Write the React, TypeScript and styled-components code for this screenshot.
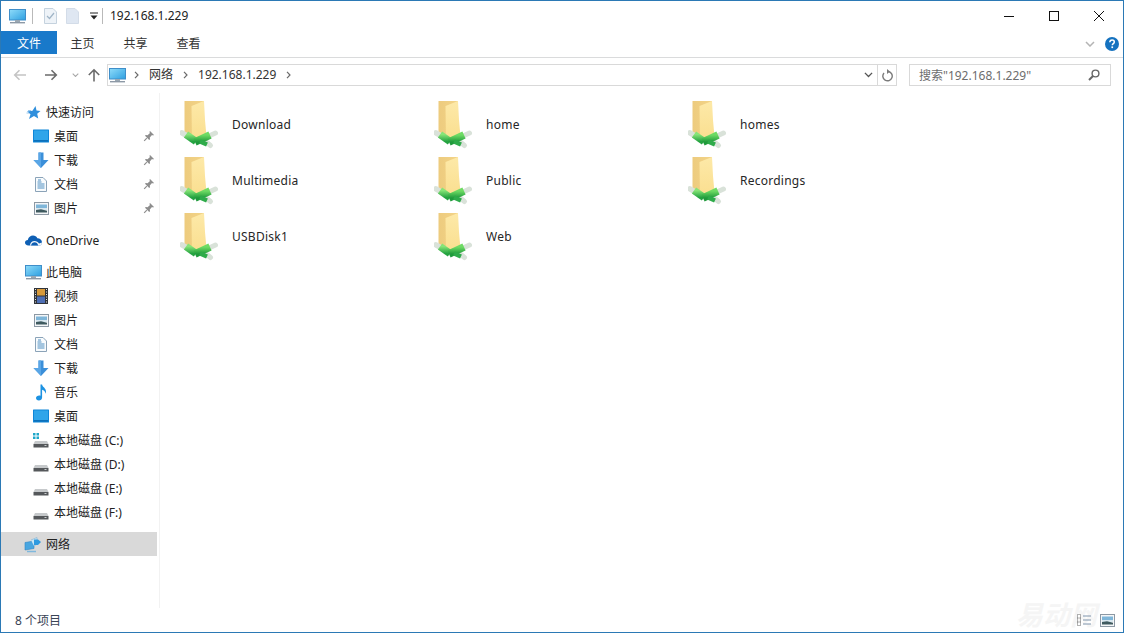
import React from "react";
import styled, { createGlobalStyle } from "styled-components";

const Global = createGlobalStyle`
  html, body { margin: 0; padding: 0; background: #fff; overflow: hidden; }
  * { box-sizing: border-box; }
`;

const FONT = `"Noto Sans", "Noto Sans CJK SC", sans-serif`;

const Win = styled.div`
  position: relative; width: 1124px; height: 633px; display: flex; flex-direction: column;
  border: 1px solid #2b79b5; background: #fff;
  font-family: ${FONT}; font-size: 12px; color: #1e1e1e; overflow: hidden;
`;
const TitleBar = styled.div`
  height: 30px; flex: none; display: flex; align-items: center; padding-left: 8px;
`;
const QuickBtn = styled.span<{ $w: number }>`
  width: ${p => p.$w}px; height: 20px; flex: none; display: flex; align-items: center;
`;
const Sep = styled.i`
  width: 1px; height: 16px; background: #b9b9b9; display: block; flex: none;
`;
const TitleText = styled.span`
  margin-left: 7px; font-size: 12px; color: #222; line-height: 16px;
`;
const Controls = styled.div`
  margin-left: auto; display: flex; align-items: center; height: 30px; padding-right: 19px; gap: 35px;
`;
const Tabs = styled.div`
  height: 27px; flex: none; display: flex; align-items: flex-start; border-bottom: 1px solid #dadbdc; position: relative;
`;
const FileTab = styled.div`
  width: 56px; height: 23px; background: #1979ca; color: #fff; display: flex; align-items: center; justify-content: center;
`;
const Tab = styled.div`
  width: 53px; height: 23px; padding-right: 2px; display: flex; align-items: center; justify-content: center; color: #333;
`;
const RibbonRight = styled.div`
  margin-left: auto; display: flex; align-items: center; gap: 10px; padding-right: 4px; height: 25px;
`;
const AddressRow = styled.div`
  height: 35px; padding-bottom: 1px; flex: none; display: flex; align-items: center;
`;
const NavButtons = styled.div`
  width: 106px; height: 22px; padding-left: 12px; display: flex; align-items: center; flex: none;
`;
const NavGap = styled.span<{ $w: number }>`
  width: ${p => p.$w}px; flex: none;
`;
const AddressBox = styled.div`
  width: 790px; height: 22px; flex: none; border: 1px solid #d9d9d9; display: flex; align-items: center; padding-left: 1px;
`;
const Crumb = styled.span`
  color: #333; margin: 0 10px 0 10px; line-height: 18px;
`;
const AddrTail = styled.div`
  margin-left: auto; display: flex; align-items: center; height: 100%;
`;
const AddrCell = styled.span<{ $w: number; $line?: boolean }>`
  width: ${p => p.$w}px; height: 100%; display: flex; align-items: center; justify-content: center;
  ${p => p.$line ? "border-left: 1px solid #d9d9d9;" : ""}
`;
const SearchBox = styled.div`
  margin-left: 12px; width: 202px; height: 22px; border: 1px solid #d9d9d9; display: flex; align-items: center;
  justify-content: space-between; padding: 0 10px 0 9px; color: #6d6d6d; flex: none;
`;
const Body = styled.div`
  flex: 1; min-height: 0; display: flex;
`;
const Sidebar = styled.nav`
  width: 159px; flex: none; border-right: 1px solid #f2f2f2; padding-top: 7px;
  display: flex; flex-direction: column;
`;
const Row = styled.div<{ $deep?: boolean; $sel?: boolean; $gap?: number }>`
  height: 24px; flex: none; width: 156px; display: flex; align-items: center; position: relative;
  padding-left: ${p => p.$deep ? 30 : 22}px; margin-top: ${p => p.$gap || 0}px;
  background: ${p => p.$sel ? "#d9d9d9" : "transparent"}; color: #222;
`;
const RowIcon = styled.span`
  width: 20px; height: 18px; flex: none; display: flex; align-items: center; justify-content: center; margin-right: 3px;
`;
const Pin = styled.span`
  position: absolute; right: 2px; top: 6px; width: 12px; height: 12px; display: flex;
`;
const Content = styled.main`
  flex: 1; padding: 3px 0 0 20px; display: grid; grid-template-columns: repeat(3, 254px); grid-auto-rows: 56px; align-content: start;
`;
const Item = styled.div`
  display: flex; align-items: center; height: 56px;
`;
const ItemIcon = styled.span`
  width: 40px; height: 56px; flex: none; margin-right: 12px; display: block;
`;
const ItemLabel = styled.span`
  color: #262626; font-size: 12px; letter-spacing: .25px;
`;
const StatusBar = styled.div`
  height: 24px; flex: none; display: flex; align-items: center; padding-left: 14px; color: #3a4456; position: relative;
`;
const StatusIcons = styled.div`
  margin-left: auto; padding-right: 8px; display: flex; align-items: center; gap: 9px; position: relative; z-index: 1;
`;
const Watermark = styled.span`
  position: absolute; right: 26px; bottom: 0; font-size: 27px; font-style: italic; font-weight: 700;
  color: #f5f5f5; line-height: 34px;
`;

const Computer = ({ s = 17 }: { s?: number }) => (
  <svg width={s} height={s} viewBox="0 0 17 17">
    <defs><linearGradient id="scr" x1="0" y1="0" x2="1" y2="1"><stop offset="0" stopColor="#8fdcfa" /><stop offset="1" stopColor="#2d9fe0" /></linearGradient></defs>
    <rect x="0.5" y="1.5" width="16" height="10.5" fill="url(#scr)" stroke="#3f8ec9" />
    <rect x="6" y="12" width="5" height="2" fill="#9aa7b2" />
    <rect x="1" y="14" width="15" height="1.4" fill="#8d99a6" />
  </svg>
);
const Star = () => (
  <svg width="15" height="15" viewBox="0 0 15 15">
    <path d="M9.5 1 L10.5 5.5 L14.5 6 L11.2 8.8 L12.2 13.5 L8 11 L3 14 L4.5 9.2 L1 6.5 L6.5 5.8 Z" fill="#2f8fdc" />
    <path d="M2 5.5h3M0.5 8h2.5" stroke="#9cc9ee" strokeWidth="1" />
  </svg>
);
const Desktop = () => (
  <svg width="16" height="14" viewBox="0 0 16 14">
    <rect x="0" y="0.5" width="16" height="13" rx="0.5" fill="#0f86d8" />
    <rect x="1" y="1.5" width="14" height="10" fill="#2fa5ea" />
    <rect x="1" y="11" width="14" height="1.5" fill="#0c6fb8" />
  </svg>
);
const Down = () => (
  <svg width="16" height="17" viewBox="0 0 16 17">
    <path d="M5.5 0.5h5V8H15.5L8 16 0.5 8H5.5Z" fill="#3b8fd9" />
    <path d="M5.5 0.5h2.5V16L0.5 8H5.5Z" fill="#5aa6e6" />
  </svg>
);
const Doc = () => (
  <svg width="12" height="15" viewBox="0 0 12 15">
    <path d="M0.5 0.5H8L11.5 4V14.5H0.5Z" fill="#f8fbfd" stroke="#8ba3b8" />
    <path d="M2.5 5h4M2.5 7h7M2.5 9h7M2.5 11h7M3 3h3" stroke="#4f8fc2" strokeWidth="1" />
  </svg>
);
const Pic = () => (
  <svg width="15" height="13" viewBox="0 0 15 13">
    <rect x="0.5" y="0.5" width="14" height="12" fill="#f4f6f8" stroke="#8c98a3" />
    <rect x="2" y="2.5" width="11" height="4" fill="#7fb6d9" />
    <rect x="2" y="6" width="11" height="2" fill="#d7e6ee" />
    <path d="M2 8l5-.8 6 1.6V10.5H2Z" fill="#3f5a5f" />
  </svg>
);
const Cloud = () => (
  <svg width="17" height="11" viewBox="0 0 17 11">
    <path d="M3.5 10.5C1.2 10.5 0 9.2 0 7.6 0 6 1.2 5 2.8 5 3.4 2.2 5.6 0.5 8 0.5c2 0 3.6 1 4.4 2.8C15 3.3 17 5.2 17 7.4c0 1.9-1.3 3.1-3 3.1Z" fill="#0e5fb4" />
    <path d="M5 10.5C5 7.8 7 6 9.5 6c2 0 3.5 1 4.5 2.5L17 7.4c0 1.9-1.3 3.1-3 3.1Z" fill="#fff" opacity=".95" />
    <path d="M6 10.5c.4-2 2-3.2 3.6-3.2 1.8 0 3 1 3.6 3.2Z" fill="#0e5fb4" />
  </svg>
);
const Film = () => (
  <svg width="14" height="16" viewBox="0 0 14 16">
    <rect width="14" height="16" fill="#30343a" />
    <rect x="3" y="1" width="8" height="6.5" fill="#d79a3b" />
    <rect x="3" y="8.5" width="8" height="6.5" fill="#4e6fb5" />
    <path d="M1 1.5h1M1 4h1M1 6.500h1M1 9h1M1 11.500h1M1 14h1M12 1.500h1M12 4h1M12 6.500h1M12 9h1M12 11.500h1M12 14h1" stroke="#e6e6e6" strokeWidth="1.2" />
  </svg>
);
const Note = () => (
  <svg width="12" height="17" viewBox="0 0 12 17">
    <path d="M5.500 0.500h1.600c.3 2.600 3.900 3.400 3.900 7 0 .9-.2 1.700-.6 2.300.1-2.200-1.700-3.600-3.300-4V13.500c0 1.900-1.500 3-3.300 3C2.200 16.500 1 15.500 1 14.100c0-1.500 1.500-2.600 3.200-2.600.5 0 .9.100 1.300.2Z" fill="#1c92e2" />
  </svg>
);
const Drive = ({ win }: { win?: boolean }) => (
  <svg width="16" height="15" viewBox="0 0 16 15">
    {win && <g fill="#1fa7c9"><rect x="0" y="0" width="2.5" height="2.500" /><rect x="3.500" y="0" width="2.500" height="2.500" /><rect x="0" y="3.500" width="2.500" height="2.500" /><rect x="3.500" y="3.500" width="2.500" height="2.500" /></g>}
    <path d="M2 8h12l1.500 3H.5Z" fill="#c6c9cb" />
    <rect x="0.500" y="11" width="15" height="3.500" fill="#55585b" />
    <rect x="11.500" y="12" width="2" height="1" fill="#c9ccce" />
  </svg>
);
const Network = () => (
  <svg width="18" height="17" viewBox="0 0 18 17">
    <path d="M1 6.500l9-1.500v7.500l-9 1.500Z" fill="#49a6e0" stroke="#2f86c6" strokeWidth=".6" />
    <path d="M7 4L13 1.500V8l-3 2" fill="#c9e6f6" stroke="#7fb2d4" strokeWidth=".6" />
    <path d="M10 3.500h4l3 2.500-3 3h-4Z" fill="#2e9ae0" />
    <path d="M3 15.500h9" stroke="#7fb8dd" strokeWidth="1.500" />
  </svg>
);
const PinIcon = () => (
  <svg width="12" height="12" viewBox="0 0 12 12">
    <path d="M7 1l4 4-1 .6-1-.5L6.800 7.400 7 9.300 6.200 10 2 5.800l.7-.8 1.900.2L7 3 6.400 2Z" fill="#8d8d8d" />
    <path d="M3.800 8.200L1.200 10.800" stroke="#8d8d8d" strokeWidth="1.200" />
  </svg>
);

const ShareFolder = () => (
  <svg width="40" height="56" viewBox="0 0 40 56">
    <defs>
      <linearGradient id="fa" x1="0" y1="0" x2="1" y2="0"><stop offset="0" stopColor="#edcb7e" /><stop offset="1" stopColor="#f3d488" /></linearGradient>
      <linearGradient id="fb" x1="0" y1="0" x2="0" y2="1"><stop offset="0" stopColor="#fde9a8" /><stop offset="1" stopColor="#fade8e" /></linearGradient>
      <linearGradient id="pg" x1="0" y1="0" x2="0" y2="1"><stop offset="0" stopColor="#86e477" /><stop offset="1" stopColor="#25a341" /></linearGradient>
      <linearGradient id="ph" x1="0" y1="0" x2="0" y2="1"><stop offset="0" stopColor="#6edb64" /><stop offset="1" stopColor="#1f9a3b" /></linearGradient>
    </defs>
    <path d="M4.500 5H24V36L12 44L4.500 40Z" fill="url(#fa)" />
    <path d="M11.500 10L24 5L25 24L26.500 40.500L12 46Z" fill="url(#fb)" />
    <path d="M2 36.800L7 39.800" stroke="#d9e2d9" strokeWidth="5.500" strokeLinecap="round" />
    <path d="M29 40L35.500 37" stroke="#d9e2d9" strokeWidth="5" strokeLinecap="round" />
    <path d="M25 45L30.500 49.500" stroke="#d9e2d9" strokeWidth="5" strokeLinecap="round" />
    <path d="M6 38.500L16 45.500" stroke="url(#pg)" strokeWidth="7.500" />
    <path d="M15 46L30 39" stroke="url(#ph)" strokeWidth="7.500" />
    <path d="M20 45.500L27 48.500" stroke="#2eab4a" strokeWidth="4.500" />
  </svg>
);

const Glyph = {
  Back: ({ c }: { c: string }) => (
    <svg width="14" height="12" viewBox="0 0 14 12"><path d="M13 6H2M6.500 1.200L1.700 6l4.800 4.800" stroke={c} strokeWidth="1.600" fill="none" /></svg>
  ),
  Fwd: ({ c }: { c: string }) => (
    <svg width="14" height="12" viewBox="0 0 14 12"><path d="M1 6h11M7.500 1.200L12.300 6l-4.800 4.800" stroke={c} strokeWidth="1.600" fill="none" /></svg>
  ),
  Up: ({ c }: { c: string }) => (
    <svg width="14" height="14" viewBox="0 0 14 14"><path d="M7 13.500V2M1.800 7L7 1.800 12.200 7" stroke={c} strokeWidth="1.600" fill="none" /></svg>
  ),
  Chev: ({ c, w = 8 }: { c: string; w?: number }) => (
    <svg width={w} height={w * 0.6} viewBox="0 0 10 6"><path d="M1 1l4 4 4-4" stroke={c} strokeWidth="1.500" fill="none" /></svg>
  ),
  Right: () => (
    <svg width="5" height="8" viewBox="0 0 5 8"><path d="M1 .8L4 4 1 7.200" stroke="#6a6a6a" strokeWidth="1.200" fill="none" /></svg>
  ),
};

const nav1 = [
  { t: "桌面", i: <Desktop /> }, { t: "下载", i: <Down /> }, { t: "文档", i: <Doc /> }, { t: "图片", i: <Pic /> },
];
const nav2 = [
  { t: "视频", i: <Film /> }, { t: "图片", i: <Pic /> }, { t: "文档", i: <Doc /> }, { t: "下载", i: <Down /> },
  { t: "音乐", i: <Note /> }, { t: "桌面", i: <Desktop /> }, { t: "本地磁盘 (C:)", i: <Drive win /> },
  { t: "本地磁盘 (D:)", i: <Drive /> }, { t: "本地磁盘 (E:)", i: <Drive /> }, { t: "本地磁盘 (F:)", i: <Drive /> },
];
const shares = ["Download", "home", "homes", "Multimedia", "Public", "Recordings", "USBDisk1", "Web"];

export default function App() {
  return (
    <Win>
      <Global />
      <TitleBar>
        <QuickBtn $w={23}><Computer /></QuickBtn>
        <Sep />
        <QuickBtn $w={11} />
        <QuickBtn $w={22}>
          <svg width="13" height="16" viewBox="0 0 13 16"><path d="M.5.500H9L12.500 4V15.500H.5Z" fill="#eef3f8" stroke="#c5d2de" /><path d="M3 8l2.500 2.500L10 5" stroke="#9fb4c6" strokeWidth="1.200" fill="none" /></svg>
        </QuickBtn>
        <QuickBtn $w={24}>
          <svg width="13" height="16" viewBox="0 0 13 16"><path d="M.5.500H9L12.500 4V15.500H.5Z" fill="#dfe7f2" stroke="#d3dce8" /></svg>
        </QuickBtn>
        <QuickBtn $w={12}>
          <svg width="8" height="8" viewBox="0 0 8 8"><path d="M0 1h8" stroke="#222" /><path d="M.5 3.500h7L4 7.500Z" fill="#222" /></svg>
        </QuickBtn>
        <Sep />
        <TitleText>192.168.1.229</TitleText>
        <Controls>
          <svg width="10" height="10" viewBox="0 0 10 10"><path d="M0 5.500h10" stroke="#111" /></svg>
          <svg width="10" height="10" viewBox="0 0 10 10"><rect x=".5" y=".5" width="9" height="9" fill="none" stroke="#111" /></svg>
          <svg width="10" height="10" viewBox="0 0 10 10"><path d="M0 0l10 10M10 0L0 10" stroke="#111" /></svg>
        </Controls>
      </TitleBar>
      <Tabs>
        <FileTab>文件</FileTab>
        <Tab>主页</Tab>
        <Tab>共享</Tab>
        <Tab>查看</Tab>
        <RibbonRight>
          <Glyph.Chev c="#b4b4b4" w={10} />
          <svg width="14" height="14" viewBox="0 0 14 14">
            <circle cx="7" cy="7" r="7" fill="#1572bf" />
            <path d="M4.800 5.200C4.900 3.800 5.900 3 7.100 3c1.300 0 2.200.8 2.200 1.900 0 1.700-2 1.700-2 3.300" stroke="#fff" strokeWidth="1.500" fill="none" />
            <rect x="6.400" y="9.400" width="1.700" height="1.700" fill="#fff" />
          </svg>
        </RibbonRight>
      </Tabs>
      <AddressRow>
        <NavButtons>
          <Glyph.Back c="#c4c4c4" />
          <NavGap $w={17} />
          <Glyph.Fwd c="#6b6b6b" />
          <NavGap $w={14} />
          <Glyph.Chev c="#a8a8a8" w={7} />
          <NavGap $w={8} />
          <Glyph.Up c="#6b6b6b" />
        </NavButtons>
        <AddressBox>
          <Computer />
          <NavGap $w={8} />
          <Glyph.Right />
          <Crumb>网络</Crumb>
          <Glyph.Right />
          <Crumb>192.168.1.229</Crumb>
          <Glyph.Right />
          <AddrTail>
            <AddrCell $w={18}><Glyph.Chev c="#555" w={9} /></AddrCell>
            <AddrCell $w={19} $line>
              <svg width="12" height="13" viewBox="0 0 12 13"><path d="M7.500 2.500A4.700 4.700 0 1 1 3 4" stroke="#7b7b7b" strokeWidth="1.400" fill="none" /><path d="M6 0v5l3-2.500Z" fill="#7b7b7b" /></svg>
            </AddrCell>
          </AddrTail>
        </AddressBox>
        <SearchBox>
          <span>搜索"192.168.1.229"</span>
          <svg width="12" height="12" viewBox="0 0 12 12"><circle cx="7.500" cy="4.500" r="3.400" fill="none" stroke="#666" strokeWidth="1.400" /><path d="M5 7L1 11" stroke="#666" strokeWidth="2" /></svg>
        </SearchBox>
      </AddressRow>
      <Body>
        <Sidebar>
          <Row><RowIcon><Star /></RowIcon>快速访问</Row>
          {nav1.map(n => (
            <Row $deep key={n.t}><RowIcon>{n.i}</RowIcon>{n.t}<Pin><PinIcon /></Pin></Row>
          ))}
          <Row $gap={8}><RowIcon><Cloud /></RowIcon>OneDrive</Row>
          <Row $gap={8}><RowIcon><Computer /></RowIcon>此电脑</Row>
          {nav2.map(n => <Row $deep key={n.t}><RowIcon>{n.i}</RowIcon>{n.t}</Row>)}
          <Row $gap={8} $sel><RowIcon><Network /></RowIcon>网络</Row>
        </Sidebar>
        <Content>
          {shares.map(s => (
            <Item key={s}><ItemIcon><ShareFolder /></ItemIcon><ItemLabel>{s}</ItemLabel></Item>
          ))}
        </Content>
      </Body>
      <StatusBar>
        8 个项目
        <Watermark>易动网</Watermark>
        <StatusIcons>
          <svg width="14" height="12" viewBox="0 0 14 12"><path d="M.5.500h3v11h-3zM.5 4h3M.5 8h3" fill="none" stroke="#666" strokeDasharray="1 1" /><path d="M6 2h8M6 6h8M6 10h8" stroke="#7f93aa" /></svg>
          <Pic />
        </StatusIcons>
      </StatusBar>
    </Win>
  );
}
